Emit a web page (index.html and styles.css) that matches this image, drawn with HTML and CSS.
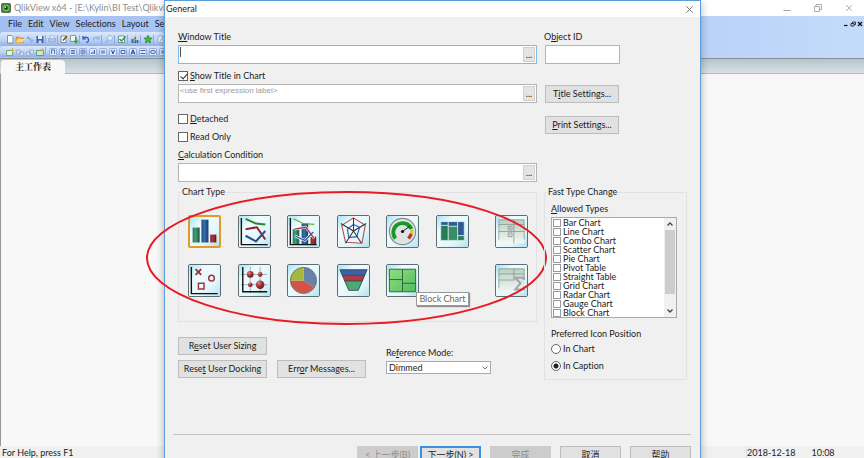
FILE: index.html
```html
<!DOCTYPE html>
<html lang="en">
<head>
<meta charset="utf-8">
<title>QlikView x64</title>
<link rel="stylesheet" href="styles.css">
</head>
<body>
<svg class="defs" aria-hidden="true">
  <defs>
    <linearGradient id="tile" x1="0" y1="0" x2="1" y2="1"><stop offset="0" stop-color="#a6e4f4"/><stop offset=".3" stop-color="#f0fcff"/><stop offset=".7" stop-color="#e2f6fb"/><stop offset="1" stop-color="#b4e2ee"/></linearGradient>
    <linearGradient id="green" x1="0" x2="1"><stop offset="0" stop-color="#1f7a58"/><stop offset=".4" stop-color="#3f9f78"/><stop offset="1" stop-color="#125a3c"/></linearGradient>
    <linearGradient id="blue" x1="0" x2="1"><stop offset="0" stop-color="#1d4a80"/><stop offset=".4" stop-color="#3a6fae"/><stop offset="1" stop-color="#163c6c"/></linearGradient>
    <linearGradient id="red" x1="0" x2="1"><stop offset="0" stop-color="#8a2028"/><stop offset=".4" stop-color="#a8353c"/><stop offset="1" stop-color="#6c1018"/></linearGradient>
    <linearGradient id="lime" x1="0" y1="0" x2="1" y2="1"><stop offset="0" stop-color="#8fe07e"/><stop offset="1" stop-color="#52bb62"/></linearGradient>
    <linearGradient id="fade" x1="0" y1="0" x2="0" y2="1"><stop offset="0" stop-color="#b9cfc4"/><stop offset="1" stop-color="#f3f8f5"/></linearGradient>
    <radialGradient id="ball" cx=".35" cy=".3" r=".8"><stop offset="0" stop-color="#e08a8a"/><stop offset=".45" stop-color="#a8333a"/><stop offset="1" stop-color="#6e1219"/></radialGradient>
    <g id="i-box"><rect x="1.500" y="1.500" width="7" height="7" rx="1" fill="#dce8fa" stroke="#7c98ca" stroke-width=".7"/></g>
  </defs>
</svg>
<div class="app">
  <header class="titlebar">
    <svg class="logo" viewBox="0 0 10 10"><rect width="10" height="10" rx="2" fill="#5b6b58"/><circle cx="5" cy="5" r="3.600" fill="#57c23a"/><circle cx="5" cy="5" r="1.800" fill="#173311"/><circle cx="4.300" cy="4.300" r=".8" fill="#e7ffe0"/></svg>
    <h1>QlikView x64 - [E:\Kylin\BI Test\Qlikview</h1>
    <div class="window-buttons">
      <button type="button" aria-label="Minimize"><svg viewBox="0 0 10 10"><path d="M1.500 7.500h7" stroke="#a3a3a3" fill="none"/></svg></button>
      <button type="button" aria-label="Restore"><svg viewBox="0 0 10 10"><path d="M1.500 3.500h5v5h-5zM3 3.500v-2h5.500v5H6.500" stroke="#999" stroke-width=".8" fill="none"/></svg></button>
      <button type="button" aria-label="Close"><svg viewBox="0 0 10 10"><path d="M2 2l6 6M8 2l-6 6" stroke="#999" stroke-width=".8"/></svg></button>
    </div>
  </header>
  <div class="bars">
    <nav class="menubar">
      <a href="#">File</a><a href="#">Edit</a><a href="#">View</a><a href="#">Selections</a><a href="#">Layout</a><a href="#">Se</a>
      <div class="child-buttons">
        <button type="button" aria-label="Minimize sheet"><svg viewBox="0 0 6 6"><path d="M1 4.500h3.500" stroke="#111" stroke-width="1.200"/></svg></button>
        <button type="button" aria-label="Restore sheet"><svg viewBox="0 0 6 6"><path d="M1 2.500h3v2.500H1zM2.500 2.500V1H5.500v2.500H4" stroke="#223" stroke-width=".9" fill="none"/></svg></button>
        <button type="button" aria-label="Close sheet"><svg viewBox="0 0 6 6"><path d="M1 1l4 4M5 1L1 5" stroke="#111" stroke-width="1.300"/></svg></button>
      </div>
    </nav>
    <div class="toolbar">
      <svg viewBox="0 0 10 10"><path d="M2.500 1.500h4l1.500 1.500v6H2.500z" fill="#fff" stroke="#66788f" stroke-width=".8"/></svg>
      <svg viewBox="0 0 10 10"><path d="M1 3h3l1 1h3.500v4.500H1z" fill="#e9a93f" stroke="#b8802c" stroke-width=".6"/><path d="M2.500 5H9.500L8 8.500H1z" fill="#ffd777"/></svg>
      <svg viewBox="0 0 10 10"><path d="M2 4.500l2-2M2 4.500h4M8 6H4M8 6L6 8.500" stroke="#8ba4cc" stroke-width="1.200" fill="none"/></svg>
      <svg viewBox="0 0 10 10"><path d="M1.500 2h7v7h-7z" fill="#3d5fae"/><path d="M3 2h4v3H3z" fill="#edf3fc"/><path d="M3.500 6.500h3V9h-3z" fill="#cfdcf2"/></svg>
      <i class="sep"></i>
      <svg viewBox="0 0 10 10"><path d="M3 2h4.500v3H3z" fill="#eef3fb" stroke="#9cb0d0" stroke-width=".7"/><path d="M1.500 4.500h7V8h-7z" fill="#b3c4df" stroke="#8fa6cc" stroke-width=".7"/></svg>
      <i class="sep"></i>
      <svg viewBox="0 0 10 10"><path d="M2 2h5v6.500H2z" fill="#fff" stroke="#6d7686" stroke-width=".8"/><path d="M4 6.500l4-4.500" stroke="#7b4a1c" stroke-width="1.500"/></svg>
      <svg viewBox="0 0 10 10"><path d="M1.500 1.500h5v6h-5z" fill="#f4f8ec" stroke="#6d8a68" stroke-width=".8"/><path d="M7 3v5M5 6.500L7 9l2-2.500" stroke="#3c9a34" stroke-width="1.200" fill="none"/></svg>
      <i class="sep"></i>
      <svg viewBox="0 0 10 10"><path d="M2 2v3h3M2 5c1.500-3 6-2 5.500 1.500C7.300 8 6 8.500 5 8.500" stroke="#2d55b8" stroke-width="1.200" fill="none"/></svg>
      <svg viewBox="0 0 10 10"><path d="M8 2v3H5M8 5C6.500 2 2 3 2.500 6.500" stroke="#9ab0d6" stroke-width="1.200" fill="none"/></svg>
      <i class="sep wide"></i>
      <svg viewBox="0 0 10 10"><circle cx="6" cy="4" r="2.500" fill="#e3ecfa" stroke="#9ab0d0" stroke-width=".9"/><path d="M4 6L1.500 8.500" stroke="#9ab0d0" stroke-width="1.300"/></svg>
      <i class="sep wide"></i>
      <svg viewBox="0 0 10 10"><path d="M1.500 2h6v6.500h-6z" fill="#fff" stroke="#557788" stroke-width=".8"/><path d="M2.500 5L4.500 7 8.500 2.500" stroke="#27a024" stroke-width="1.500" fill="none"/></svg>
      <i class="sep wide"></i>
      <svg viewBox="0 0 10 10"><path d="M1.500 5h2v4h-2zM4 3h2v6H4zM6.500 6h2v3h-2z" fill="#3a63b0"/><path d="M6 1L3.500 5h2L4 8" stroke="#e8b531" fill="none"/></svg>
      <i class="sep wide"></i>
      <svg viewBox="0 0 10 10"><path d="M5 1l1.200 2.800 3 .3-2.200 2 .6 3L5 7.500 2.400 9.100l.6-3-2.200-2 3-.3z" fill="#43b43c" stroke="#207f25" stroke-width=".6"/></svg>
      <i class="sep wide"></i>
      <svg viewBox="0 0 10 10"><path d="M2 2h5v6.500H2z" fill="#e7eefa" stroke="#8fa6cc" stroke-width=".8"/><path d="M4 7l4-5" stroke="#8fa6cc"/></svg>
    </div>
    <div class="toolbar low">
      <svg viewBox="0 0 10 10"><path d="M1.500 3.500h6v5h-6z" fill="#e5f3e2" stroke="#589a72" stroke-width=".8"/><path d="M7.500 1v4M5.500 3h4" stroke="#e8b32f"/></svg>
      <svg viewBox="0 0 10 10"><path d="M1.500 3h4v4h-4zM4.500 5h4v3.500h-4z" fill="#d3deef" stroke="#97abc9" stroke-width=".8"/></svg>
      <svg viewBox="0 0 10 10"><path d="M4.500 3h4v4h-4zM1.500 5h4v3.500h-4z" fill="#d3deef" stroke="#97abc9" stroke-width=".8"/></svg>
      <svg viewBox="0 0 10 10"><path d="M1.500 3.500h7v5h-7z" fill="#cfe7c8" stroke="#4f8d67" stroke-width=".8"/><path d="M4.500 3l4-2v3z" fill="#e9a93f"/></svg>
      <i class="sep wide"></i>
      <svg viewBox="0 0 10 10"><use href="#i-box"/><path d="M3 3h4M3.500 3v4M6.500 3v4" stroke="#4a68a8" stroke-width=".9" fill="none"/></svg>
      <svg viewBox="0 0 10 10"><use href="#i-box"/><path d="M7 3H3l2 2-2 2h4" stroke="#2f4c98" stroke-width=".9" fill="none"/></svg>
      <svg viewBox="0 0 10 10"><use href="#i-box"/><path d="M3 3.500h4M3 5h4M3 6.500h4" stroke="#4a68a8" stroke-width=".9"/></svg>
      <svg viewBox="0 0 10 10"><use href="#i-box"/><path d="M3 3h4v4H3zM3 5h4M5 3v4" stroke="#5374b4" stroke-width=".8" fill="none"/></svg>
      <svg viewBox="0 0 10 10"><use href="#i-box"/><path d="M3.500 7V5.500M5 7V4.500M6.500 7V3" stroke="#4a68a8"/></svg>
      <svg viewBox="0 0 10 10"><use href="#i-box"/><path d="M3 4.200h4M3 6h4" stroke="#4a68a8"/></svg>
      <svg viewBox="0 0 10 10"><use href="#i-box"/><path d="M3.500 3L5 7l1.500-4" stroke="#2f4c98" fill="none"/></svg>
      <svg viewBox="0 0 10 10"><use href="#i-box"/><path d="M3 3.500h4v3H3z" stroke="#4a68a8" fill="none"/></svg>
      <svg viewBox="0 0 10 10"><use href="#i-box"/><path d="M3 7.500L5 2.800l2 4.700M3.800 6h2.400" stroke="#1f3c88" fill="none"/></svg>
      <svg viewBox="0 0 10 10"><use href="#i-box"/><path d="M2.500 3.500h5M2.500 6.500h5" stroke="#4a68a8"/></svg>
      <svg viewBox="0 0 10 10"><use href="#i-box"/><ellipse cx="5" cy="5" rx="2.500" ry="1.500" stroke="#4a68a8" fill="none"/></svg>
      <svg viewBox="0 0 10 10"><use href="#i-box"/><path d="M5 2.500v5M2.800 3.700l4.400 2.600M7.200 3.700L2.800 6.300" stroke="#5374b4" stroke-width=".8"/></svg>
    </div>
  </div>
  <div class="tabs"><button type="button" class="tab">主工作表</button></div>
  <main class="sheet"></main>
  <footer class="statusbar"><span>For Help, press F1</span><span class="clock"><span>2018-12-18</span><span class="time">10:08</span></span></footer>

  <section class="dialog" role="dialog" aria-labelledby="dlg-title">
    <header class="dialog-title">
      <h2 id="dlg-title">General</h2>
      <button type="button" aria-label="Close dialog"><svg viewBox="0 0 10 10"><path d="M1.500 1.500l7 7M8.500 1.500l-7 7" stroke="#555" stroke-width=".9"/></svg></button>
    </header>
    <form class="dialog-body">
      <div class="left">
        <label for="wt"><u>W</u>indow Title</label>
        <div class="field focus"><input id="wt" type="text"><span class="caret"></span><button type="button" aria-label="Edit window title">...</button></div>
        <label class="check show-title"><input type="checkbox" checked><span><u>S</u>how Title in Chart</span></label>
        <div class="field"><input type="text" class="hint" placeholder="&lt;use first expression label&gt;" aria-label="Title expression"><button type="button" aria-label="Edit title">...</button></div>
        <label class="check detached"><input type="checkbox"><span><u>D</u>etached</span></label>
        <label class="check stacked"><input type="checkbox"><span>Read Only</span></label>
        <label for="cc" class="stacked"><u>C</u>alculation Condition</label>
        <div class="field"><input id="cc" type="text"><button type="button" aria-label="Edit condition">...</button></div>

        <fieldset class="chart-type">
          <legend>Chart Type</legend>
          <div class="chart-grid">
            <button type="button" class="chart selected" aria-label="Bar Chart"><svg viewBox="0 0 33 33"><rect width="33" height="33" fill="url(#tile)"/><rect x="3" y="12" width="8" height="17" fill="url(#green)"/><rect x="13" y="3" width="8" height="26" fill="url(#blue)"/><rect x="23" y="20" width="7" height="9" fill="url(#red)"/></svg></button>
            <button type="button" class="chart" aria-label="Line Chart"><svg viewBox="0 0 33 33"><rect width="33" height="33" fill="url(#tile)"/><path d="M2.500 2v28.500h28" fill="none" stroke="#111" stroke-width="1.500"/><path d="M7 3l11 5 10 1" fill="none" stroke="#2c8238" stroke-width="2"/><path d="M7 14l12-2 9 13" fill="none" stroke="#8c2630" stroke-width="2.200"/><path d="M7 21l11 6 10-11" fill="none" stroke="#26508e" stroke-width="2.200"/></svg></button>
            <button type="button" class="chart" aria-label="Combo Chart"><svg viewBox="0 0 33 33"><rect width="33" height="33" fill="url(#tile)"/><rect x="5" y="14" width="7" height="16" fill="url(#green)"/><rect x="14.500" y="8" width="7" height="22" fill="url(#blue)"/><rect x="24" y="22" width="6" height="8" fill="url(#red)"/><path d="M2.500 2v28.500h28" fill="none" stroke="#111" stroke-width="1.500"/><path d="M6 3l10 5 12 1" fill="none" stroke="#5fa63c" stroke-width="1.300"/><path d="M7 14l12-2 9 12M7 21l11 5 9-9" fill="none" stroke="#edf7fb" stroke-width="2.800"/><path d="M7 14l12-2 9 12" fill="none" stroke="#a5333c" stroke-width="1.400"/><path d="M7 21l11 5 9-9" fill="none" stroke="#315d9f" stroke-width="1.400"/></svg></button>
            <button type="button" class="chart" aria-label="Radar Chart"><svg viewBox="0 0 33 33"><rect width="33" height="33" fill="url(#tile)"/><path d="M16.500 2L29 10l-3.500 19L8 28 4 10z" fill="none" stroke="#bd4d50" stroke-width="1.200"/><path d="M16.500 9L23 12l-3 10-8.500 1L10 14z" fill="none" stroke="#3558bb" stroke-width="1.200"/><path d="M16.500 16V2M16.500 16L30 8M16.500 16L3 8M16.500 16L25 29M16.500 16L8 29" stroke="#333" stroke-width="1.100"/></svg></button>
            <button type="button" class="chart" aria-label="Gauge Chart"><svg viewBox="0 0 33 33"><rect width="33" height="33" fill="url(#tile)"/><circle cx="16.500" cy="16.500" r="14" fill="#dfe3e3" stroke="#7e8a8a" stroke-width="1.200"/><path d="M9 24A10 10 0 1 1 26 14" fill="none" stroke="#149b28" stroke-width="4"/><path d="M26.500 15v4" stroke="#e5c229" stroke-width="3.500"/><path d="M26 19l-3 5" stroke="#be2f28" stroke-width="3.500"/><path d="M16.500 16.500L24 11" stroke="#111"/><circle cx="16.500" cy="16.500" r="1.700" fill="#111"/></svg></button>
            <button type="button" class="chart" aria-label="Mekko Chart"><svg viewBox="0 0 33 33"><rect width="33" height="33" fill="url(#tile)"/><g stroke="#e3f5ef" stroke-width=".7"><path d="M4 6h8v4H4z" fill="#2e5b94"/><path d="M4 10h8v16H4z" fill="#267c56"/><path d="M12 6h10v5H12z" fill="#2e5b94"/><path d="M12 11h10v15H12z" fill="#358e66"/><path d="M22 6h7v15h-7z" fill="#2e5b94"/><path d="M22 21h7v5h-7z" fill="#267c56"/></g></svg></button>
            <button type="button" class="chart" aria-label="Scatter Chart"><svg viewBox="0 0 33 33"><rect width="33" height="33" fill="url(#tile)"/><path d="M2.500 2v28.500h28" fill="none" stroke="#111" stroke-width="1.500"/><path d="M7 4.500l6 6M13 4.500l-6 6" stroke="#962f36" stroke-width="1.900"/><circle cx="24" cy="14" r="3" fill="none" stroke="#a2383e" stroke-width="1.600"/><path d="M10 19.500h6v6h-6z" fill="none" stroke="#a2383e" stroke-width="1.600"/></svg></button>
            <button type="button" class="chart" aria-label="Grid Chart"><svg viewBox="0 0 33 33"><rect width="33" height="33" fill="url(#tile)"/><path d="M12 2v28M22.500 2v28M2 10h28M2 21h28" stroke="#8d999e" stroke-width=".8"/><path d="M4 2v26.500h26" fill="none" stroke="#111" stroke-width="1.500"/><circle cx="12" cy="10" r="3.500" fill="url(#ball)"/><circle cx="22.500" cy="10" r="2.500" fill="url(#ball)"/><circle cx="12" cy="21" r="2.500" fill="url(#ball)"/><circle cx="22.500" cy="21" r="4.500" fill="url(#ball)"/></svg></button>
            <button type="button" class="chart" aria-label="Pie Chart"><svg viewBox="0 0 33 33"><rect width="33" height="33" fill="url(#tile)"/><path d="M16.500 16.500V2.500A14 14 0 0 1 28 24z" fill="#6682a7"/><path d="M16.500 16.500L28 24A14 14 0 0 1 2.500 16.500z" fill="#ce5548"/><path d="M16.500 16.500H2.500A14 14 0 0 1 16.500 2.500z" fill="#a3b83c"/><circle cx="16.500" cy="16.500" r="14" fill="none" stroke="#59605f" stroke-width=".8"/></svg></button>
            <button type="button" class="chart" aria-label="Funnel Chart"><svg viewBox="0 0 33 33"><rect width="33" height="33" fill="url(#tile)"/><path d="M2 5h29l-2.500 6h-24z" fill="#3b62a6"/><path d="M4.500 11h24L26 17H7z" fill="#b13b43"/><path d="M7 17h19l-4.500 10h-10z" fill="#4aac73"/><path d="M2 5h29l-9.500 22h-10zM4.500 11h24M7 17h19" fill="none" stroke="#33424b" stroke-width=".9"/></svg></button>
            <div class="tip-anchor">
              <button type="button" class="chart" aria-label="Block Chart"><svg viewBox="0 0 33 33"><rect width="33" height="33" fill="url(#tile)"/><path d="M2.500 4.500h28v24h-28z" fill="url(#lime)"/><path d="M2.500 4.500h28v24h-28zM16.500 4.500v24M2.500 15.500h14M16.500 19.500h14" fill="none" stroke="#28613a"/></svg></button>
              <span class="tooltip" role="tooltip">Block Chart</span>
            </div>
          </div>
          <div class="chart-tables">
            <button type="button" class="chart" aria-label="Pivot Table"><svg viewBox="0 0 33 33"><rect width="33" height="33" fill="url(#tile)"/><path d="M3 4h27v25H3z" fill="url(#fade)"/><path d="M3 9h27M3 16.500h27M19 4v25M3 4h27M3 4v21M30 4v21" stroke="#84948b" stroke-width=".8" fill="none"/><path d="M13 11h4v4h-4zM13 18h4v4h-4zM15 12v2M14 13h2M14 20h2" stroke="#69766f" stroke-width=".7" fill="#f4f7f5"/></svg></button>
            <button type="button" class="chart" aria-label="Straight Table"><svg viewBox="0 0 33 33"><rect width="33" height="33" fill="url(#tile)"/><path d="M3 4h27v25H3z" fill="url(#fade)"/><path d="M3 9.500h27M3 16h17M19 4v12M3 4h27M3 4v21M30 4v12" stroke="#84948b" stroke-width=".8" fill="none"/><path d="M29.500 16v-2.500h-9l5.500 6-5.500 6.500h9V23" stroke="#a2a7a5" stroke-width="2.200" fill="none"/></svg></button>
          </div>
          <svg class="annotation" viewBox="0 0 402 136" preserveAspectRatio="none" aria-hidden="true"><ellipse cx="201" cy="68" rx="200" ry="66" fill="none" stroke="#ea1a22" stroke-width="2"/></svg>
        </fieldset>

        <div class="options">
          <div class="resets">
            <button type="button" class="btn">R<u>e</u>set User Sizing</button>
            <button type="button" class="btn">Rese<u>t</u> User Docking</button>
          </div>
          <button type="button" class="btn">Err<u>o</u>r Messages...</button>
          <div class="mode">
            <label for="rm">Re<u>f</u>erence Mode:</label>
            <div class="select-wrap"><select id="rm"><option>Dimmed</option></select><svg viewBox="0 0 8 8"><path d="M1.500 2.500L4 5l2.500-2.500" stroke="#666" stroke-width=".9" fill="none"/></svg></div>
          </div>
        </div>
      </div>

      <div class="right">
        <label for="oid">O<u>b</u>ject ID</label>
        <div class="field short"><input id="oid" type="text"></div>
        <button type="button" class="btn title-settings">T<u>i</u>tle Settings...</button>
        <button type="button" class="btn print-settings"><u>P</u>rint Settings...</button>
        <fieldset class="fast">
          <legend>Fast Type Change</legend>
          <p><u>A</u>llowed Types</p>
          <div class="listbox">
            <div class="list">
              <label><input type="checkbox">Bar Chart</label>
              <label><input type="checkbox">Line Chart</label>
              <label><input type="checkbox">Combo Chart</label>
              <label><input type="checkbox">Scatter Chart</label>
              <label><input type="checkbox">Pie Chart</label>
              <label><input type="checkbox">Pivot Table</label>
              <label><input type="checkbox">Straight Table</label>
              <label><input type="checkbox">Grid Chart</label>
              <label><input type="checkbox">Radar Chart</label>
              <label><input type="checkbox">Gauge Chart</label>
              <label><input type="checkbox">Block Chart</label>
            </div>
            <div class="scrollbar">
              <button type="button" aria-label="Scroll up"><svg viewBox="0 0 12 12"><path d="M3.500 7.500L6 5l2.500 2.500" stroke="#444" stroke-width="1.300" fill="none"/></svg></button>
              <div class="thumb"></div>
              <button type="button" aria-label="Scroll down"><svg viewBox="0 0 12 12"><path d="M3.500 4.500L6 7l2.500-2.500" stroke="#444" stroke-width="1.300" fill="none"/></svg></button>
            </div>
          </div>
          <p class="icon-pos">Preferred Icon Position</p>
          <label class="check"><input type="radio" name="pos"><span>In Chart</span></label>
          <label class="check"><input type="radio" name="pos" checked><span>In Caption</span></label>
        </fieldset>
      </div>
    </form>
    <footer class="dialog-footer">
      <button type="button" class="btn" disabled>&lt; 上一步(B)</button>
      <button type="button" class="btn primary">下一步(N) &gt;</button>
      <button type="button" class="btn gap" disabled>完成</button>
      <button type="button" class="btn gap">取消</button>
      <button type="button" class="btn gap">帮助</button>
    </footer>
  </section>
</div>
</body>
</html>
```
FILE: styles.css
```css
* { box-sizing: border-box; }
body {
  margin: 0;
  font: 9px/12px Lato, "Noto Sans CJK SC", sans-serif;
  font-variant-ligatures: none;
  color: #1c1c1c;
}
h1, h2, p { margin: 0; font-size: inherit; font-weight: 400; }
button, input, select { font: inherit; font-variant-ligatures: none; color: inherit; margin: 0; padding: 0; border-radius: 0; }
button { border: 0; background: none; }
svg { display: block; }
a { color: inherit; text-decoration: none; }
.defs { position: absolute; width: 0; height: 0; }

.app {
  position: relative;
  display: flex;
  flex-direction: column;
  height: 100vh;
  overflow: hidden;
  background: #f8f8f8;
}

/* application window */
.titlebar { display: flex; align-items: center; gap: 3px; height: 16px; padding: 0 10px 0 1px; background: #fff; }
.titlebar h1 { font-size: 9px; color: #8c8c8c; white-space: nowrap; }
.logo { width: 10px; height: 10px; }
.window-buttons { display: flex; gap: 21px; margin-left: auto; }
.window-buttons svg { width: 10px; height: 10px; }

.bars {
  height: 43px;
  border-bottom: 1px solid #8b9098;
  background: linear-gradient(90deg, #a2bff2, #a9c6f6 20%, #bbd3f9 84%, #c5dbfa);
}
.menubar { display: flex; align-items: center; gap: 6px; height: 15px; padding: 0 1px 0 8px; }
.child-buttons { display: flex; gap: 1px; margin-left: auto; }
.child-buttons svg { width: 6px; height: 6px; }
.toolbar {
  display: flex;
  align-items: center;
  width: 19%;
  height: 14px;
  margin-top: 1px;
  padding-left: 5px;
  border-radius: 3px;
  background: linear-gradient(#dbe8fc, #b9d1f5 60%, #8fb1e8);
}
.toolbar.low { height: 11px; margin-top: 0; }
.toolbar svg { flex: none; width: 10px; height: 10px; }
.sep { flex: none; width: 2px; height: 9px; border-left: 1px solid #8eabdc; }
.sep.wide { width: 3px; }

.tabs { height: 15px; padding: 1px 1px 0; border-bottom: 1px solid #b7babc; background: linear-gradient(#b3c5cc, #d8e0e5); }
.tab {
  display: block;
  height: 14px;
  width: 64px;
  border-radius: 3px 4px 0 0;
  background: #f8f8f8;
  font: 9px/12px "Noto Serif CJK SC", "Noto Sans CJK SC", serif;
  font-weight: 700;
}
.sheet { flex: 1; border-left: 1px solid #999; }
.statusbar { display: flex; justify-content: space-between; height: 12px; padding: 1px 0 0 2px; background: #f0f0f0; }
.clock { display: flex; gap: 16px; width: 118px; border-left: 1px solid #ddd; }

/* dialog */
.dialog {
  position: absolute;
  top: 0;
  left: 164px;
  right: 163px;
  border: 1px solid #5b9edb;
  background: #f0f0f0;
  box-shadow: 0 2px 8px rgba(0, 0, 0, .3);
}
.dialog-title { display: flex; align-items: center; justify-content: space-between; height: 16px; padding: 0 6px 0 1px; background: #fff; }
.dialog-title svg { width: 9px; height: 9px; }
.dialog-body { display: flex; gap: 7px; padding: 14px 13px 0; }
.left { flex: 1; min-width: 0; }
.left > label, .right > label { display: block; }
.right { width: 143px; }

.field {
  position: relative;
  display: flex;
  height: 19px;
  margin-top: 2px;
  border: 1px solid #b4b4b4;
  background: #fff;
}
.field.focus { border-color: #7ebbea; }
.field input { flex: 1; min-width: 0; border: 0; padding: 0 1px; background: none; outline: 0; }
.field .hint { padding-bottom: 5px; font-family: "Liberation Sans", Arial, sans-serif; font-size: 8px; }
.hint::placeholder { color: #9a9a9a; opacity: 1; }
.field button { width: 12px; margin: 1px; border: 1px solid #d0d0d0; background: #e4e4e4; line-height: 12px; }
.field.short { width: 75px; margin-left: 1px; }
.caret { position: absolute; left: 1px; top: 1px; width: 1px; height: 10px; background: #555; }

.check { display: flex; align-items: center; gap: 2px; }
.left > .check { display: flex; }
.check input, .list input { appearance: none; flex: none; width: 10px; height: 10px; border: 1px solid #666; background: #fff; }
.check input[type="radio"] { border-radius: 50%; }
.check input[type="radio"]:checked { background: radial-gradient(circle, #222 2px, #fff 3px); }
.check input[type="checkbox"]:checked::before {
  content: "";
  display: block;
  width: 3px;
  height: 6px;
  margin-left: 3px;
  border: solid #333;
  border-width: 0 1px 1px 0;
  transform: rotate(42deg);
}
.show-title { margin-top: 6px; }
.detached { margin-top: 10px; }
.stacked { margin-top: 6px; }

fieldset { position: relative; margin: 0; padding: 0; border: 1px solid #e2e2e2; min-width: 0; }
legend { padding: 0 1px; }

.chart-type { display: flex; justify-content: space-between; margin-top: 4px; padding: 17px 8px 24px 9px; }
.chart-type legend { margin-left: -7px; }
.chart-grid { display: grid; grid-template-columns: repeat(6, 33px); justify-content: space-between; gap: 16px 0; width: 281px; }
.chart-tables { display: grid; gap: 16px; }
.chart { display: block; width: 33px; height: 33px; border: 1px solid #5d6d74; border-radius: 2px; overflow: hidden; }
.chart svg { width: 100%; height: 100%; }
.chart.selected { border: 2px solid #dc9d27; }
.tip-anchor { position: relative; }
.tooltip {
  position: absolute;
  left: 30px;
  top: 28px;
  padding: 0 2px;
  border: 1px solid #999;
  background: #fff;
  color: #666;
  white-space: nowrap;
  box-shadow: 1px 1px 1px rgba(0, 0, 0, .4);
}
.annotation {
  position: absolute;
  left: -33px;
  top: -8px;
  width: calc(100% + 44px);
  height: 136px;
  pointer-events: none;
}

.btn { height: 18px; border: 1px solid #bdbdbd; background: #e1e1e1; line-height: 16px; white-space: nowrap; }
.options { display: flex; align-items: flex-end; margin-top: 15px; }
.options .btn { width: 89px; }
.resets { display: grid; gap: 5px; margin-right: 10px; }
.mode { margin: 0 0 4px 20px; }
.mode label { display: block; margin-bottom: 2px; }
.select-wrap { position: relative; width: 105px; }
.select-wrap svg { position: absolute; right: 2px; top: 3px; width: 8px; height: 8px; pointer-events: none; }
select { display: block; appearance: none; width: 100%; height: 13px; padding: 0 2px; border: 1px solid #aaa; background: #fff; line-height: 11px; }

.right .btn { display: block; width: 74px; margin-left: 1px; }
.title-settings { margin-top: 21px; }
.print-settings { margin-top: 13px; }
.fast { margin-top: 52px; padding: 5px 9px 7px 6px; }
.fast legend { margin-left: -4px; }
.listbox { display: flex; height: 101px; margin: 2px 0 10px; border: 1px solid #aaa; background: #fff; }
.list { flex: 1; padding-left: 1px; }
.list label { display: flex; align-items: center; gap: 2px; height: 9px; line-height: 9px; }
.list input { width: 8px; height: 8px; border-color: #999; }
.scrollbar { display: flex; flex-direction: column; width: 12px; background: #f0f0f0; }
.scrollbar button { height: 12px; }
.scrollbar svg { width: 12px; height: 12px; }
.thumb { height: 64px; margin: 0 1px auto; background: #cdcdcd; }
.icon-pos { margin-bottom: 3px; }
.fast .check + .check { margin-top: 5px; }

.dialog-footer {
  display: flex;
  justify-content: flex-end;
  gap: 2px;
  margin: 54px 9px 0 8px;
  padding: 11px 0 10px;
  border-top: 1px solid #c4c4c4;
}
.dialog-footer .btn { width: 61px; }
.dialog-footer .gap { margin-left: 7px; }
.dialog-footer .primary { border: 2px solid #3d91dc; line-height: 14px; }
.btn:disabled { border-color: #ccc; background: #ccc; color: #8c8c8c; }
```
